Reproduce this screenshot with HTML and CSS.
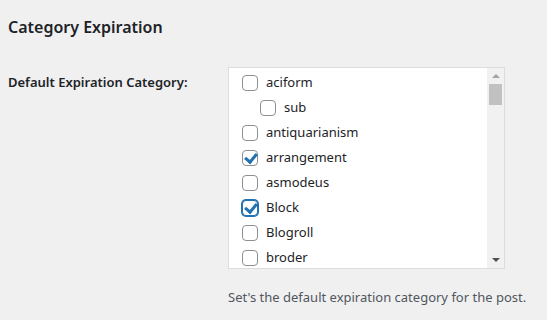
FILE: index.html
```html
<!DOCTYPE html>
<html lang="en">
<head>
    <meta charset="UTF-8">
    <meta name="viewport" content="width=device-width, initial-scale=1.0">
    <title>Category Expiration</title>
    <link rel="stylesheet" href="styles.css">
</head>
<body>
    <h2 class="section-title">Category Expiration</h2>
    <div class="form-row">
        <div class="form-label">Default Expiration Category:</div>
        <div class="form-field">
            <div class="category-box">
                <ul class="category-list">
                    <li><label><input type="checkbox"> aciform</label>
                        <ul class="children">
                            <li><label><input type="checkbox"> sub</label></li>
                        </ul>
                    </li>
                    <li><label><input type="checkbox"> antiquarianism</label></li>
                    <li><label><input type="checkbox" checked> arrangement</label></li>
                    <li><label><input type="checkbox"> asmodeus</label></li>
                    <li><label><input type="checkbox" class="focused" checked> Block</label></li>
                    <li><label><input type="checkbox"> Blogroll</label></li>
                    <li><label><input type="checkbox"> broder</label></li>
                </ul>
                <div class="scrollbar">
                    <span class="arrow arrow-up"></span>
                    <div class="track"><div class="thumb"></div></div>
                    <span class="arrow arrow-down"></span>
                </div>
            </div>
            <p class="description">Set's the default expiration category for the post.</p>
        </div>
    </div>
</body>
</html>
```

FILE: styles.css
```css
body {
    font-family: "Noto Sans", "Open Sans", sans-serif;
    font-size: 13px;
    color: #1d2327;
    background-color: #f0f0f1;
    margin: 0;
    padding: 0 8px;
}
.section-title {
    font-size: 16px;
    font-weight: 600;
    margin: 0;
    padding: 16px 0 0;
    line-height: 22px;
}
.form-row {
    display: flex;
    margin-top: 29px;
}
.form-label {
    width: 220px;
    flex-shrink: 0;
    font-size: 13px;
    font-weight: 600;
    padding-top: 5px;
    line-height: 20px;
}
.form-field {
    flex: 1;
    min-width: 0;
}
.category-box {
    display: flex;
    width: 275px;
    height: 200px;
    border: 1px solid #dcdcde;
    background-color: #fff;
    overflow: hidden;
}
.category-list,
.children {
    list-style: none;
    margin: 0;
    padding: 0;
}
.category-list {
    flex: 1;
    padding: 2px 0 0 13px;
    overflow: hidden;
}
.children {
    padding-left: 18px;
}
.category-list li {
    line-height: 25px;
}
.category-list label {
    display: flex;
    align-items: center;
    gap: 8px;
    height: 25px;
    cursor: pointer;
}
.category-list input {
    appearance: none;
    width: 16px;
    height: 16px;
    margin: 0;
    border: 1px solid #8c8f94;
    border-radius: 4px;
    background-color: #fff;
    position: relative;
    flex-shrink: 0;
}
.category-list input:checked::before {
    content: "";
    position: absolute;
    left: 4px;
    top: 0px;
    width: 5px;
    height: 9px;
    border: solid #2271b1;
    border-width: 0 3px 3px 0;
    transform: rotate(40deg);
}
.category-list input.focused {
    border-color: #2271b1;
    box-shadow: 0 0 0 1px #2271b1;
}
.scrollbar {
    width: 17px;
    display: flex;
    flex-direction: column;
    align-items: center;
    background-color: #f1f1f1;
}
.arrow {
    display: block;
    width: 0;
    height: 0;
    margin: 6px 0;
    border-left: 4px solid transparent;
    border-right: 4px solid transparent;
}
.arrow-up {
    border-bottom: 4px solid #a3a3a3;
}
.arrow-down {
    border-top: 4px solid #505050;
}
.track {
    flex: 1;
    width: 13px;
}
.thumb {
    height: 21px;
    background-color: #c1c1c1;
}
.description {
    color: #50575e;
    margin: 18px 0 0;
    line-height: 20px;
    white-space: nowrap;
}
```
